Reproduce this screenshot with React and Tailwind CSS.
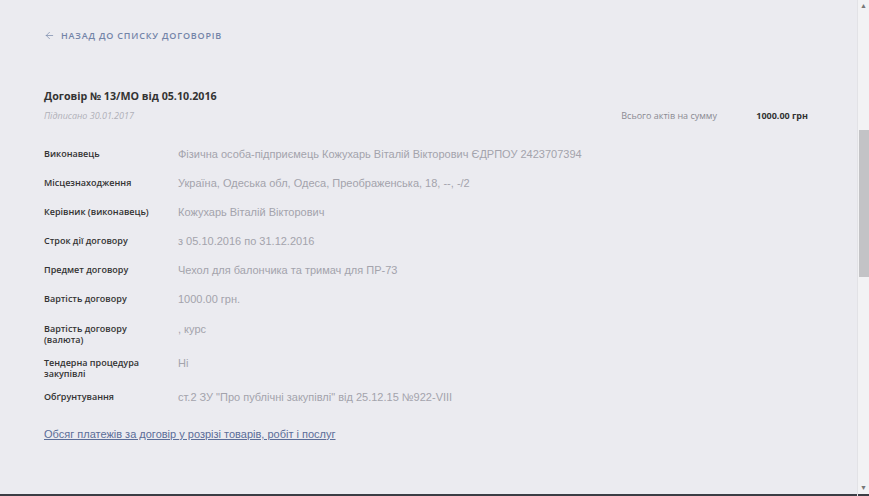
import { ArrowLeft } from 'lucide-react'

const rows = [
  ['Виконавець', 'Фізична особа-підприємець Кожухарь Віталій Вікторович ЄДРПОУ 2423707394'],
  ['Місцезнаходження', 'Україна, Одеська обл, Одеса, Преображенська, 18, --, -/2'],
  ['Керівник (виконавець)', 'Кожухарь Віталій Вікторович'],
  ['Строк дії договору', 'з 05.10.2016 по 31.12.2016'],
  ['Предмет договору', 'Чехол для балончика та тримач для ПР-73'],
  ['Вартість договору', '1000.00 грн.'],
  ['Вартість договору (валюта)', ', курс'],
  ['Тендерна процедура закупівлі', 'Ні'],
  ['Обґрунтування', 'ст.2 ЗУ "Про публічні закупівлі" від 25.12.15 №922-VIII'],
]

export default function App() {
  return (
    <div className="h-[496px] w-[869px] flex overflow-hidden bg-[#ebebf0] font-['Open_Sans',sans-serif]">
      <div className="flex-1 flex flex-col">
        <div className="flex-1 pl-[44px] pr-[49px] pt-[29px]">
          {/* back link */}
          <a className="flex items-center gap-[6px] text-[9px] font-semibold uppercase tracking-[0.09em] text-[#7384a8]">
            <ArrowLeft size={11} strokeWidth={1.5} />
            Назад до списку договорів
          </a>

          {/* header */}
          <div className="mt-[44px] flex items-end justify-between">
            <div>
              <h1 className="text-[10.7px] font-bold text-[#333] leading-[18px]">Договір № 13/МО від 05.10.2016</h1>
              <div className="mt-[5px] text-[9px] italic text-[#b0b0b8] leading-[12px]">Підписано 30.01.2017</div>
            </div>
            <div className="flex items-center text-[9px] leading-[12px]">
              <span className="text-[#8a8a92] w-[135px]">Всього актів на сумму</span>
              <span className="font-bold text-[#333]">1000.00 грн</span>
            </div>
          </div>

          {/* details */}
          <div className="mt-[20px] w-[560px]">
            {rows.map(([label, value], i) => (
              <div key={i} className="flex items-start py-[5px] min-h-[29.2px]">
                <div className="w-[134px] pr-[20px] text-[9px] font-semibold leading-[11.5px] text-[#333] pt-[1px]">{label}</div>
                <div className="flex-1 font-['Liberation_Sans',sans-serif] text-[11px] leading-[14px] text-[#a3a3ac]">{value}</div>
              </div>
            ))}
          </div>

          <a className="mt-[12px] inline-block font-['Liberation_Sans',sans-serif] text-[11px] underline text-[#5b6d98]">
            Обсяг платежів за договір у розрізі товарів, робіт і послуг
          </a>
        </div>
        <div className="h-[2px] bg-[#3a3d44]" />
      </div>

      {/* scrollbar */}
      <div className="w-[12px] bg-[#f2f2f4] flex flex-col items-center border-l border-[#e2e2e6]">
        <div className="h-[12px] text-[7px] leading-[12px] text-[#777]">▲</div>
        <div className="mt-[118px] h-[147px] w-[10px] bg-[#c3c3c6]" />
        <div className="flex-1" />
        <div className="h-[12px] text-[7px] leading-[12px] text-[#777]">▼</div>
        <div className="h-[2px] w-full bg-[#3a3d44]" />
      </div>
    </div>
  )
}
